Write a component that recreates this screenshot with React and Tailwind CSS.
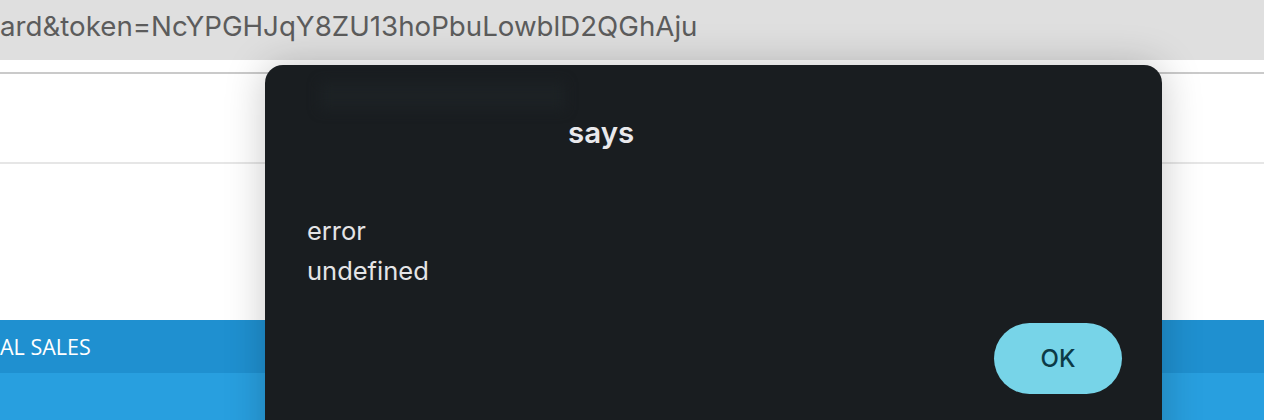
import React from 'react';

const sans = { fontFamily: 'Inter, "Noto Sans", sans-serif' };

const App = () => {
  return (
    <div className="relative w-[1264px] h-[420px] overflow-hidden bg-white" style={sans}>
      {/* address bar */}
      <div className="h-[60px] bg-[#dfdfdf] flex items-center">
        <span className="text-[27.7px] text-[#5c5c5c] leading-none -mt-[6px] whitespace-nowrap">
          ard&amp;token=NcYPGHJqY8ZU13hoPbuLowblD2QGhAju
        </span>
      </div>

      {/* page behind */}
      <div className="h-[12px]" />
      <div className="h-[2px] bg-[#cacaca]" />
      <div className="h-[88px]" />
      <div className="h-[2px] bg-[#e6e6e6]" />
      <div className="h-[156px]" />
      <div className="h-[53px] bg-[#1f90d0] flex items-center">
        <span
          className="text-[21.5px] text-white leading-none whitespace-nowrap"
          style={{ fontFamily: '"Open Sans", sans-serif' }}
        >
          AL SALES
        </span>
      </div>
      <div className="h-[60px] bg-[#289fdf]" />

      {/* alert dialog */}
      <div className="absolute left-[265px] top-[65px] w-[897px] h-[420px] rounded-[18px] bg-[#191d20] shadow-[0_0_40px_rgba(0,0,0,0.22)]">
        <div className="absolute left-[55px] top-[17px] w-[245px] h-[28px] bg-[#1c2124] blur-[6px]" />
        <div className="pt-[47px] pl-[303px]">
          <h2 className="text-[29.5px] font-semibold text-[#e9e9ec] leading-[40px]">says</h2>
        </div>
        <div className="pl-[42px] pt-[59px] text-[25.5px] text-[#e4e4e6] leading-[40px]">
          <p>error</p>
          <p>undefined</p>
        </div>
        <div className="flex justify-end pr-[40px] pt-[32px]">
          <button className="w-[128px] h-[71px] rounded-full bg-[#77d4e8] text-[#0c3a47] text-[24px] font-medium">
            OK
          </button>
        </div>
      </div>
    </div>
  );
};

export default App;
